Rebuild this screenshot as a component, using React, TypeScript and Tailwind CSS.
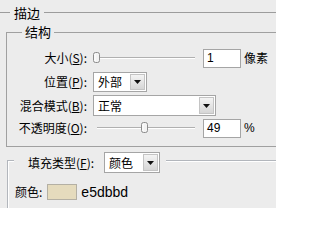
import React from "react";

const cjk = { fontFamily: '"Noto Sans CJK SC", "Noto Sans", sans-serif' };
const lat = { fontFamily: '"Liberation Sans", Arial, sans-serif' };

function Arrow() {
  return (
    <svg width="7" height="4" viewBox="0 0 7 4">
      <path d="M0 0H7L3.5 4Z" fill="#111" />
    </svg>
  );
}

function Select({ className, text }: { className: string; text: string }) {
  return (
    <div className={"flex border border-[#a5a5a5] bg-white " + className}>
      <div className="flex-1 pl-[4px] flex items-center text-[12px] text-black">{text}</div>
      <div className="w-[15px] m-px border border-[#c4c4c4] bg-gradient-to-b from-[#f4f4f4] to-[#d6d6d6] flex items-center justify-center">
        <Arrow />
      </div>
    </div>
  );
}

function Thumb() {
  return (
    <svg width="8" height="11" viewBox="0 0 8 11">
      <rect x="0.5" y="0.5" width="6" height="10" rx="2" fill="#f3f3f3" stroke="#8c8c8c" />
      <line x1="2" y1="2" x2="2" y2="9" stroke="#ffffff" />
    </svg>
  );
}

function Slider({ thumbClass }: { thumbClass: string }) {
  return (
    <div className="relative w-[102px] h-[20px]">
      <div className="absolute left-[4px] right-0 top-[9px] h-[2px] border-t border-t-[#b0b0b0] border-b border-b-white" />
      <div className={"absolute top-[4px] " + thumbClass}>
        <Thumb />
      </div>
    </div>
  );
}

function NumBox({ value }: { value: string }) {
  return (
    <div
      className="ml-[8px] w-[38px] h-[19px] border border-[#a5a5a5] bg-white pl-[3px] flex items-center text-[12px] text-black"
      style={lat}
    >
      {value}
    </div>
  );
}

function Label({ children }: { children: React.ReactNode }) {
  return <div className="w-[80px] text-right text-[12px] text-black whitespace-nowrap">{children}</div>;
}

export default function App() {
  return (
    <div className="w-[276px] h-[208px] bg-[#ececec] overflow-hidden text-black" style={cjk}>
      {/* header */}
      <div className="flex items-center h-[25px]">
        <div className="w-[10px] h-px bg-[#9c9c9c]" />
        <div className="px-[4px] text-[13px] leading-none">描边</div>
        <div className="flex-1 h-px bg-[#9c9c9c]" />
      </div>

      {/* 结构 group */}
      <div className="relative mt-[7px] ml-[6px] w-[300px] border border-[#a0a0a0] pt-[15px] pb-[8px] flex flex-col">
        <div className="absolute left-[15px] top-[-9px] px-[3px] bg-[#ececec] text-[13px] leading-[16px]">结构</div>

        <div className="flex items-center h-[20px]">
          <Label>
            大小(<span className="underline">S</span>):
          </Label>
          <div className="ml-[6px] flex items-center">
            <Slider thumbClass="left-0" />
            <NumBox value="1" />
            <div className="ml-[3px] text-[12px]">像素</div>
          </div>
        </div>

        <div className="flex items-center h-[20px] mt-[4px]">
          <Label>
            位置(<span className="underline">P</span>):
          </Label>
          <div className="ml-[6px]">
            <Select className="w-[54px] h-[20px]" text="外部" />
          </div>
        </div>

        <div className="flex items-center h-[21px] mt-[3px]">
          <Label>
            混合模式(<span className="underline">B</span>):
          </Label>
          <div className="ml-[6px]">
            <Select className="w-[123px] h-[21px]" text="正常" />
          </div>
        </div>

        <div className="flex items-center h-[20px] mt-[2px]">
          <Label>
            不透明度(<span className="underline">O</span>):
          </Label>
          <div className="ml-[6px] flex items-center">
            <Slider thumbClass="left-[48px]" />
            <NumBox value="49" />
            <div className="ml-[3px] text-[12px]" style={lat}>%</div>
          </div>
        </div>
      </div>

      {/* 填充 group */}
      <div className="relative mt-[13px] ml-[7px] w-[300px] h-[60px] border-t border-l border-[#b2b6bc] shadow-[inset_1px_1px_0_#ffffff] pt-[23px] pl-[7px]">
        <div className="absolute left-[6px] top-[-9px] pl-[14px] pr-[6px] bg-[#ececec] flex items-center">
          <div className="text-[12px] whitespace-nowrap">
            填充类型(<span className="underline">F</span>):
          </div>
          <div className="ml-[10px]">
            <Select className="w-[56px] h-[21px]" text="颜色" />
          </div>
        </div>

        <div className="flex items-center h-[16px]">
          <div className="text-[12px]">颜色:</div>
          <div className="ml-[5px] w-[30px] h-[16px] border border-[#b4b0a4] bg-[#e5dbbd]" />
          <div className="ml-[4px] text-[14px] leading-none" style={lat}>e5dbbd</div>
        </div>
      </div>
    </div>
  );
}
